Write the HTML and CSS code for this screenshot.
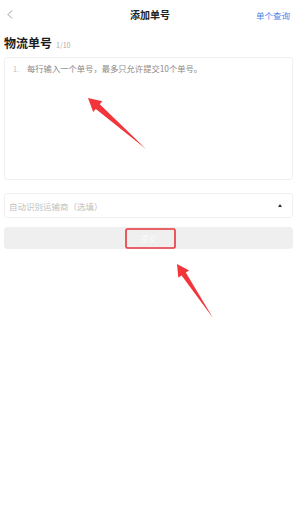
FILE: index.html
```html
<!DOCTYPE html>
<html lang="zh-CN">
<head>
  <meta charset="UTF-8" />
  <meta name="viewport" content="width=device-width, initial-scale=1.0" />
  <title>添加单号</title>
  <link rel="stylesheet" href="styles.css">
</head>
<body>
  <div class="page">
    <header class="nav">
      <span class="nav-back">
        <svg width="6" height="9" viewBox="0 0 6 9"><path d="M5 0.5 L1 4.5 L5 8.5" fill="none" stroke="#999" stroke-width="1"/></svg>
      </span>
      <div class="nav-title">添加单号</div>
      <a class="nav-link">单个查询</a>
    </header>

    <main class="content">
      <div class="field-label">
        <span class="label-text">物流单号</span>
        <span class="label-count">1/10</span>
      </div>

      <div class="numbers-box">
        <span class="line-no">1.</span>
        <span class="placeholder">每行输入一个单号，最多只允许提交10个单号。</span>
      </div>

      <div class="carrier-select">
        <span class="select-placeholder">自动识别运输商（选填）</span>
        <span class="select-caret"></span>
      </div>

      <button class="submit-button">提交</button>
    </main>

    <!-- annotation overlay -->
    <svg class="marks" width="300" height="528" viewBox="0 0 300 528">
      <polygon fill="#f2353a" points="88,98 102.4,101.3 99.8,104.3 146,149 95.8,108.9 93.2,111.9"/>
      <rect x="126" y="229" width="49" height="19" rx="1.5" fill="none" stroke="#e8343c" stroke-width="1.6"/>
      <polygon fill="#f2353a" points="177,264 189.1,270.4 185.8,272.6 213,318 181.6,275.4 178.3,277.6"/>
    </svg>
  </div>
</body>
</html>
```

FILE: styles.css
```css
body {
  margin: 0;
  font-family: "Noto Sans CJK SC", "Noto Sans", sans-serif;
  background: #fff;
}
.page {
  position: relative;
  width: 300px;
  height: 528px;
  overflow: hidden;
}
.nav {
  position: relative;
  height: 30px;
  display: flex;
  align-items: center;
  justify-content: center;
}
.nav-back {
  position: absolute;
  left: 7px;
  top: 10px;
  display: flex;
}
.nav-title {
  font-size: 10px;
  font-weight: 700;
  color: #222;
  margin-top: -2px;
}
.nav-link {
  position: absolute;
  right: 10px;
  top: 9px;
  font-size: 8.5px;
  color: #4a86e8;
}
.content {
  padding: 0 7px 0 4px;
}
.field-label {
  display: flex;
  align-items: baseline;
  height: 27px;
  padding-top: 4px;
  box-sizing: border-box;
}
.label-text {
  font-size: 12px;
  font-weight: 700;
  color: #1a1a1a;
}
.label-count {
  font-size: 7px;
  color: #aaa;
  margin-left: 4px;
}
.numbers-box {
  height: 123px;
  box-sizing: border-box;
  border: 1px solid #f0f0f0;
  border-radius: 3px;
  padding: 4px 8px;
  display: flex;
  align-items: baseline;
}
.line-no {
  font-size: 7px;
  color: #bbb;
  width: 14px;
}
.placeholder {
  font-size: 8.3px;
  color: #888;
}
.carrier-select {
  margin-top: 13px;
  height: 25px;
  box-sizing: border-box;
  border: 1px solid #f0f0f0;
  border-radius: 3px;
  padding: 0 10px 0 4px;
  display: flex;
  align-items: center;
  justify-content: space-between;
}
.select-placeholder {
  font-size: 8.5px;
  color: #c0c0c0;
}
.select-caret {
  width: 0;
  height: 0;
  border-left: 2px solid transparent;
  border-right: 2px solid transparent;
  border-bottom: 3px solid #333;
}
.submit-button {
  display: block;
  width: 100%;
  margin-top: 9px;
  height: 22px;
  border: none;
  border-radius: 4px;
  background: #efefef;
  color: #fafafa;
  font-family: inherit;
  font-size: 8px;
  padding: 0;
}
.marks {
  position: absolute;
  left: 0;
  top: 0;
  pointer-events: none;
}
```
